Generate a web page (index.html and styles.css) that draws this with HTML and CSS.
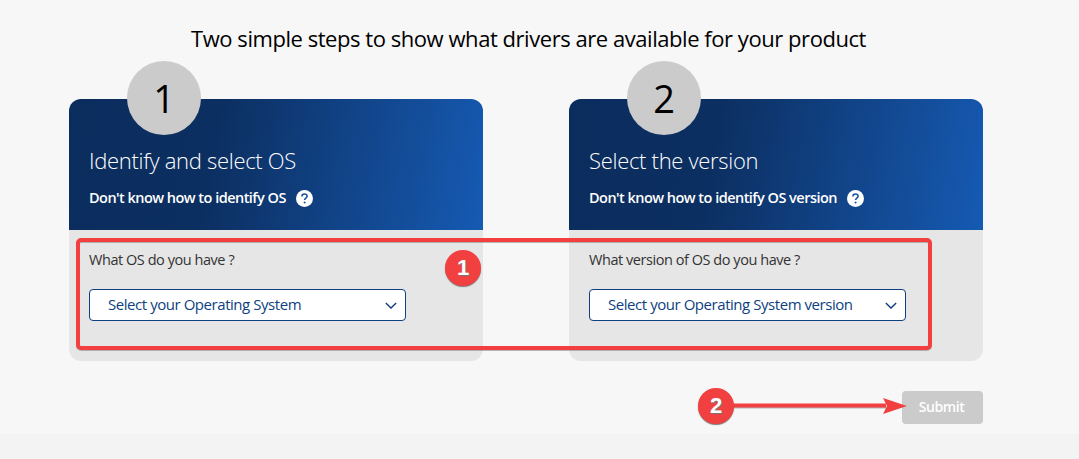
FILE: index.html
```html
<!DOCTYPE html>
<html lang="en">
<head>
    <meta charset="UTF-8">
    <meta name="viewport" content="width=device-width, initial-scale=1.0">
    <title>Drivers</title>

    <link rel="stylesheet" href="styles.css">
</head>
<body>
    <div class="page">
        <h2 class="title">Two simple steps to show what drivers are available for your product</h2>

        <div class="steps">
            <div class="step">
                <div class="step-head">
                    <div class="step-num">1</div>
                    <h3>Identify and select OS</h3>
                    <p class="help">Don't know how to identify OS
                        <svg class="help-icon" viewBox="0 0 17 17"><circle cx="8.5" cy="8.5" r="8.5" fill="#fff"/><path d="M5.9 6.6c0-1.6 1.1-2.5 2.6-2.5s2.6.9 2.6 2.2c0 1.9-2.5 1.9-2.5 3.8" fill="none" stroke="#14509f" stroke-width="1.5"/><circle cx="8.6" cy="12.6" r="1" fill="#14509f"/></svg>
                    </p>
                </div>
                <div class="step-body">
                    <label>What OS do you have ?</label>
                    <div class="select">
                        <span>Select your Operating System</span>
                        <svg class="chevron" viewBox="0 0 14 8"><path d="M1 1l6 6 6-6" fill="none" stroke="#0e3f7f" stroke-width="1.6"/></svg>
                    </div>
                </div>
            </div>

            <div class="step">
                <div class="step-head">
                    <div class="step-num">2</div>
                    <h3>Select the version</h3>
                    <p class="help">Don't know how to identify OS version
                        <svg class="help-icon" viewBox="0 0 17 17"><circle cx="8.5" cy="8.5" r="8.5" fill="#fff"/><path d="M5.9 6.6c0-1.6 1.1-2.5 2.6-2.5s2.6.9 2.6 2.2c0 1.9-2.5 1.9-2.5 3.8" fill="none" stroke="#14509f" stroke-width="1.5"/><circle cx="8.6" cy="12.6" r="1" fill="#14509f"/></svg>
                    </p>
                </div>
                <div class="step-body">
                    <label>What version of OS do you have ?</label>
                    <div class="select">
                        <span>Select your Operating System version</span>
                        <svg class="chevron" viewBox="0 0 14 8"><path d="M1 1l6 6 6-6" fill="none" stroke="#0e3f7f" stroke-width="1.6"/></svg>
                    </div>
                </div>
            </div>
        </div>

        <div class="actions">
            <button type="button">Submit</button>
        </div>
    </div>
    <div class="footer-band"></div>

    <!-- red annotations on top of the page -->
    <svg class="marks" width="1079" height="459" viewBox="0 0 1079 459">
        <rect x="78" y="240" width="852" height="108" rx="3" fill="none" stroke="#8a8a8a" stroke-width="4" transform="translate(0 1)" opacity="0.6"/>
        <rect x="78" y="240" width="852" height="108" rx="3" fill="none" stroke="#f24040" stroke-width="4"/>
        <path d="M733 406.5H886" stroke="#8a8a8a" stroke-width="4" opacity="0.6"/>
        <path d="M733 405.5H886" stroke="#f24040" stroke-width="4"/>
        <path d="M883 398L907 406L883 414L887 406Z" fill="#f24040"/>
    </svg>
    <div class="badge badge-one">1</div>
    <div class="badge badge-two">2</div>
</body>
</html>
```

FILE: styles.css
```css
body {
    font-family: 'Open Sans', sans-serif;
    background-color: #f7f7f7;
    margin: 0;
    height: 459px;
    overflow: hidden;
    position: relative;
}
.page {
    padding: 23px 96px 0 69px;
}
.title {
    font-size: 22px;
    font-weight: 400;
    line-height: 30px;
    letter-spacing: -0.45px;
    color: #000;
    text-align: center;
    margin: 0 0 8px 0;
    padding-left: 5px;
    position: relative;
    z-index: 1;
}
.steps {
    display: flex;
    justify-content: space-between;
}
.step {
    width: 414px;
    padding-top: 38px;
}
.step-head {
    height: 131px;
    box-sizing: border-box;
    padding: 48px 20px 0 20px;
    border-radius: 12px 12px 0 0;
    background: linear-gradient(100deg, #0b2d5e 0%, #0c2f61 35%, #14509f 85%, #155ab4 100%);
    color: white;
    position: relative;
}
.step-num {
    position: absolute;
    left: 58px;
    top: -38px;
    width: 74px;
    height: 74px;
    border-radius: 50%;
    background-color: #cbcbcb;
    color: #000;
    font-size: 38px;
    line-height: 74px;
    text-align: center;
}
.step-head h3 {
    font-size: 22px;
    font-weight: 300;
    line-height: 26px;
    letter-spacing: -0.3px;
    margin: 0;
}
.help {
    display: flex;
    align-items: center;
    gap: 10px;
    font-size: 14.5px;
    font-weight: 600;
    line-height: 20px;
    letter-spacing: -0.53px;
    margin: 15px 0 0 0;
}
.help-icon {
    width: 17px;
    height: 17px;
}
.step-body {
    height: 131px;
    box-sizing: border-box;
    padding: 20px 20px 0 20px;
    background-color: #e6e6e6;
    border-radius: 0 0 12px 12px;
}
.step-body label {
    display: block;
    font-size: 14.5px;
    line-height: 20px;
    letter-spacing: -0.45px;
    color: #333;
}
.select {
    display: flex;
    align-items: center;
    justify-content: space-between;
    width: 317px;
    height: 32px;
    box-sizing: border-box;
    margin-top: 19px;
    padding: 0 8px 0 18px;
    background-color: white;
    border: 1px solid #0e3f7f;
    border-radius: 4px;
    color: #0e3f7f;
    font-size: 15px;
    line-height: 28px;
    letter-spacing: -0.45px;
}
.select span {
    margin-top: -2px;
}
.chevron {
    width: 12px;
    height: 7px;
}
.actions {
    display: flex;
    justify-content: flex-end;
    margin-top: 30px;
}
.actions button {
    width: 81px;
    height: 33px;
    padding: 0 2px 2px 0;
    background-color: #cbcbcb;
    color: white;
    border: none;
    border-radius: 4px;
    font-family: inherit;
    font-size: 14px;
    font-weight: 600;
    letter-spacing: -0.4px;
}
.footer-band {
    position: absolute;
    left: 0;
    right: 0;
    top: 434px;
    bottom: 0;
    background-color: #f3f3f3;
}
.marks {
    position: absolute;
    left: 0;
    top: 0;
}
.badge {
    position: absolute;
    width: 36px;
    height: 36px;
    border-radius: 50%;
    background-color: #f24040;
    box-shadow: 0 1px 1px #777;
    color: white;
    font-family: 'Liberation Sans', sans-serif;
    font-size: 22px;
    font-weight: 700;
    line-height: 36px;
    text-align: center;
    text-shadow: 1px 1px 1px #777;
}
.badge-one { left: 445px; top: 250px; }
.badge-two { left: 698px; top: 388px; }
```
